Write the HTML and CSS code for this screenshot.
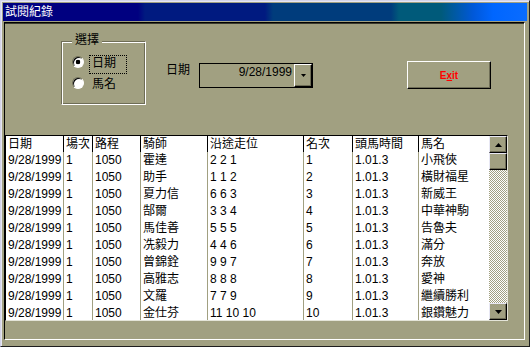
FILE: index.html
```html
<!DOCTYPE html>
<html lang="zh-Hant">
<head>
<meta charset="utf-8">
<title>試閱紀錄</title>
<link rel="stylesheet" href="styles.css">
</head>
<body>
<div class="window">
  <div class="titlebar">試閱紀錄</div>
  <div class="client">
    <div class="top">
      <div class="group">
        <div class="legend">選擇</div>
        <div class="opt first"><span class="radio on"></span><span class="lbl focus">日期</span></div>
        <div class="opt"><span class="radio"></span><span class="lbl">馬名</span></div>
      </div>
      <div class="datefield">
        <span class="dlabel">日期</span>
        <div class="combo">
          <span class="val">9/28/1999</span>
          <span class="drop"><svg width="5" height="3" viewBox="0 0 5 3"><polygon points="0,0 5,0 2.5,3" fill="#000"/></svg></span>
        </div>
      </div>
      <button class="exit">E<u>x</u>it</button>
    </div>
    <div class="grid">
      <div class="table">
        <div class="c h">日期</div><div class="c h">場次</div><div class="c h">路程</div><div class="c h">騎師</div><div class="c h">沿途走位</div><div class="c h">名次</div><div class="c h">頭馬時間</div><div class="c h">馬名</div>

        <div class="c">9/28/1999</div><div class="c">1</div><div class="c">1050</div><div class="c">霍達</div><div class="c">2 2 1</div><div class="c">1</div><div class="c">1.01.3</div><div class="c">小飛俠</div>
        <div class="c">9/28/1999</div><div class="c">1</div><div class="c">1050</div><div class="c">助手</div><div class="c">1 1 2</div><div class="c">2</div><div class="c">1.01.3</div><div class="c">橫財福星</div>
        <div class="c">9/28/1999</div><div class="c">1</div><div class="c">1050</div><div class="c">夏力信</div><div class="c">6 6 3</div><div class="c">3</div><div class="c">1.01.3</div><div class="c">新威王</div>
        <div class="c">9/28/1999</div><div class="c">1</div><div class="c">1050</div><div class="c">郜爾</div><div class="c">3 3 4</div><div class="c">4</div><div class="c">1.01.3</div><div class="c">中華神駒</div>
        <div class="c">9/28/1999</div><div class="c">1</div><div class="c">1050</div><div class="c">馬佳善</div><div class="c">5 5 5</div><div class="c">5</div><div class="c">1.01.3</div><div class="c">告魯夫</div>
        <div class="c">9/28/1999</div><div class="c">1</div><div class="c">1050</div><div class="c">冼毅力</div><div class="c">4 4 6</div><div class="c">6</div><div class="c">1.01.3</div><div class="c">滿分</div>
        <div class="c">9/28/1999</div><div class="c">1</div><div class="c">1050</div><div class="c">曾錦銓</div><div class="c">9 9 7</div><div class="c">7</div><div class="c">1.01.3</div><div class="c">奔放</div>
        <div class="c">9/28/1999</div><div class="c">1</div><div class="c">1050</div><div class="c">高雅志</div><div class="c">8 8 8</div><div class="c">8</div><div class="c">1.01.3</div><div class="c">愛神</div>
        <div class="c">9/28/1999</div><div class="c">1</div><div class="c">1050</div><div class="c">文羅</div><div class="c">7 7 9</div><div class="c">9</div><div class="c">1.01.3</div><div class="c">繼續勝利</div>
        <div class="c">9/28/1999</div><div class="c">1</div><div class="c">1050</div><div class="c">金仕芬</div><div class="c">11 10 10</div><div class="c">10</div><div class="c">1.01.3</div><div class="c">銀鑽魅力</div>
      </div>
      <div class="vscroll">
        <div class="sbtn"><svg width="7" height="4" viewBox="0 0 7 4"><polygon points="3.5,0 7,4 0,4" fill="#000"/></svg></div>
        <div class="sbtn thumb"></div>
        <div class="track"></div>
        <div class="sbtn"><svg width="7" height="4" viewBox="0 0 7 4"><polygon points="0,0 7,0 3.5,4" fill="#000"/></svg></div>
      </div>
    </div>
  </div>
</div>
</body>
</html>
```

FILE: styles.css
```css
html, body {
  margin: 0;
  padding: 0;
  background: #a1a081;
}

body {
  font-family: "Liberation Sans", "Noto Sans CJK TC", sans-serif;
  font-size: 12px;
  color: #000;
}

.window {
  width: 530px;
  height: 347px;
  box-sizing: border-box;
  background: #a1a081;
  border: 1px solid;
  border-color: #d4d4ea #1e1e1e #1e1e1e #d4d4ea;
  box-shadow: inset 1px 1px 0 #e6e6f2;
  padding: 2px 2px 2px 2px;
  display: flex;
  flex-direction: column;
}

.titlebar {
  flex: none;
  height: 18px;
  padding-left: 2px;
  color: #fff;
  font: 12px/18px "Liberation Sans", "Noto Sans CJK TC", sans-serif;
  background: linear-gradient(to right,
    #000080 0, #000080 135px,
    #001a80 142px, #001a80 262px,
    #003c7c 270px, #003c7c 388px,
    #005a7a 396px, #005a7a 438px,
    #0058d8 470px, #0066ff 490px, #0a6cff 524px);
}

.client {
  flex: 1;
  margin: 1px 2px 4px 1px;
  border: 1px solid;
  border-color: #000 #fff #fff #000;
  box-shadow: inset 0 1px 0 #3a3a2e;
  display: flex;
  flex-direction: column;
}

.top {
  height: 112px;
  flex: none;
  display: flex;
  align-items: flex-start;
}

/* group box */
.group {
  margin: 18px 0 0 56px;
  width: 85px;
  height: 64px;
  box-sizing: border-box;
  padding: 0 0 0 10px;
  border: 1px solid;
  border-color: #6e6d56 #fff #fff #6e6d56;
  box-shadow: inset 1px 1px 0 #fff, inset -1px -1px 0 #6e6d56;
}

.legend {
  margin-top: -9px;
  width: fit-content;
  padding: 0 3px;
  line-height: 14px;
  background: #a1a081;
}

.opt {
  display: flex;
  align-items: flex-start;
  gap: 5px;
  height: 19px;
  margin-top: 2px;
}

.opt.first {
  margin-top: 8px;
}

.radio {
  flex: none;
  width: 12px;
  height: 12px;
  margin-top: 1px;
  box-sizing: border-box;
  border-radius: 50%;
  border: 1px solid;
  border-color: #6e6d56 #fff #fff #6e6d56;
  box-shadow: inset 1px 1px 0 #000;
  background: #fff;
}

.radio.on {
  background: radial-gradient(circle, #000 0 2px, #fff 2.6px);
}

.lbl {
  box-sizing: border-box;
  width: 38px;
  height: 19px;
  padding-left: 2px;
  border: 1px dotted transparent;
  line-height: 14px;
}

.lbl.focus {
  border-color: #000;
}

/* date combo */
.datefield {
  display: flex;
  align-items: flex-start;
  gap: 9px;
  margin: 40px 0 0 20px;
}

.dlabel {
  line-height: 14px;
}

.combo {
  width: 114px;
  height: 25px;
  box-sizing: border-box;
  border: 1px solid #000;
  display: flex;
  justify-content: flex-end;
  align-items: flex-start;
}

.val {
  line-height: 14px;
  padding: 1px 2px 0 0;
}

.drop {
  width: 18px;
  height: 23px;
  box-sizing: border-box;
  border: 1px solid;
  border-color: #fff #000 #000 #fff;
  box-shadow: inset -1px -1px 0 #6e6d56;
  display: flex;
  align-items: center;
  justify-content: center;
}

.drop svg {
  display: block;
}

/* exit button */
.exit {
  margin: 38px 0 0 94px;
  width: 84px;
  height: 28px;
  box-sizing: border-box;
  padding: 0;
  border: 1px solid;
  border-color: #fff #000 #000 #fff;
  box-shadow: inset -1px -1px 0 #6e6d56;
  background: #a1a081;
  color: #ff0000;
  font: bold 10px "Liberation Sans", sans-serif;
}

/* data grid */
.grid {
  flex: none;
  width: 503px;
  height: 186px;
  box-sizing: border-box;
  border: 1px solid;
  border-color: #000 #e4e4d8 #e4e4d8 #000;
  background: #fff;
  display: flex;
}

.table {
  width: 483px;
  height: 100%;
  overflow: hidden;
  display: grid;
  grid-template-columns: 58px 29px 48px 67px 96px 49px 66px 70px;
  grid-template-rows: 16px;
  grid-auto-rows: 17px;
  align-content: start;
}

.c {
  box-sizing: border-box;
  padding-left: 2px;
  border-right: 1px solid #a1a081;
  white-space: nowrap;
  overflow: hidden;
  line-height: 17px;
}

.c.h {
  border-right-color: #000;
  line-height: 16px;
}

.c:nth-child(8n) {
  border-right: none;
}

.vscroll {
  width: 18px;
  display: flex;
  flex-direction: column;
  background-color: #fff;
  background-image: repeating-conic-gradient(#a1a081 0 25%, #fff 0 50%);
  background-size: 2px 2px;
}

.sbtn {
  flex: none;
  height: 17px;
  box-sizing: border-box;
  background: #a1a081;
  border: 1px solid;
  border-color: #e8e8f4 #000 #000 #e8e8f4;
  box-shadow: inset -1px -1px 0 #6e6d56;
  display: flex;
  align-items: center;
  justify-content: center;
}

.sbtn svg {
  display: block;
}

.track {
  flex: 1;
}
```
